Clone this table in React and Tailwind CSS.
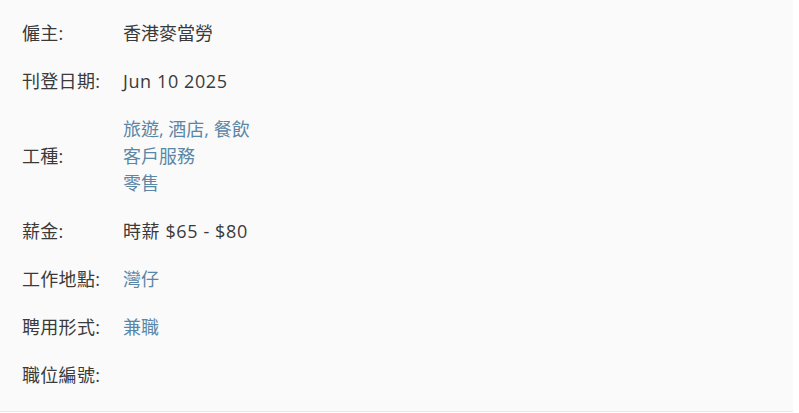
const rows = [
  { label: "僱主:", values: ["香港麥當勞"] },
  { label: "刊登日期:", values: ["Jun 10 2025"], latin: true },
  { label: "工種:", values: ["旅遊, 酒店, 餐飲", "客戶服務", "零售"], link: true },
  { label: "薪金:", values: ["時薪 $65 - $80"], latin: true },
  { label: "工作地點:", values: ["灣仔"], link: true },
  { label: "聘用形式:", values: ["兼職"], link: true },
  { label: "職位編號:", values: [] },
];

export default function App() {
  return (
    <div className="w-[793px] h-[412px] bg-[#fafafa] border-b border-[#e8e8e8] pt-[20px] pl-[22px]"
      style={{ fontFamily: '"Open Sans", "Noto Sans CJK TC", sans-serif' }}>
      <div className="flex flex-col gap-[21px] text-[18px] leading-[27px] text-[#3a3a3a]">
        {rows.map((row) => (
          <div key={row.label} className="flex items-center">
            <div className="w-[101px] shrink-0 tracking-[0.3px]">{row.label}</div>
            <div className="flex flex-col min-h-[27px]">
              {row.values.map((v) => (
                <span key={v} className={row.link ? "text-[#5b87a6]" : row.latin ? "tracking-[0.6px]" : ""}>{v}</span>
              ))}
            </div>
          </div>
        ))}
      </div>
    </div>
  );
}
